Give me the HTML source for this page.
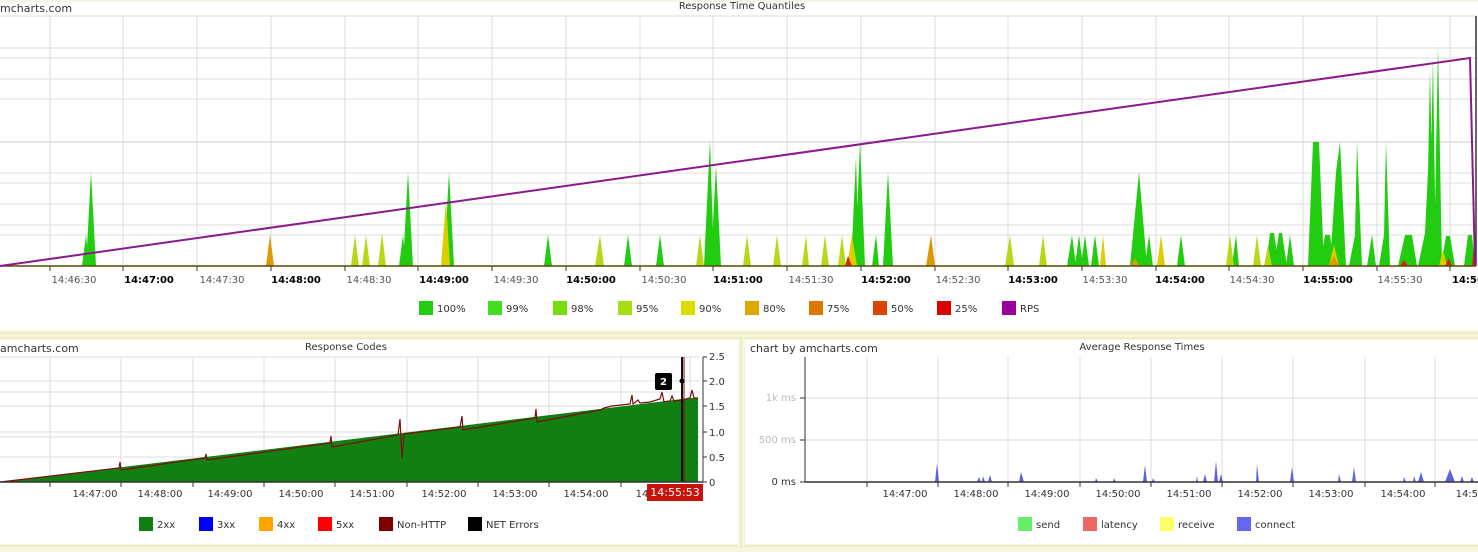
<!DOCTYPE html>
<html><head><meta charset="utf-8"><style>
body{margin:0;width:1478px;height:552px;overflow:hidden;background:#fff;font-family:"Liberation Sans",Verdana,sans-serif;}
svg{position:absolute;left:0;top:0}
text{font-family:"DejaVu Sans","Liberation Sans",sans-serif;font-size:10px}
.b{font-weight:bold;fill:#000}
.g{fill:#555}
.w{fill:#fff}
.l{fill:#bbb}
</style></head><body>
<svg width="1478" height="552" viewBox="0 0 1478 552" fill="#333">
<rect x="0" y="0" width="1478" height="552" fill="#fff"/>
<rect x="0" y="330" width="1478" height="10" fill="#f6f6dc"/>
<line x1="0" y1="333" x2="1478" y2="333" stroke="#e6e6b0"/>
<line x1="0" y1="338" x2="1478" y2="338" stroke="#e6e6b0"/>
<rect x="0" y="544" width="1478" height="8" fill="#f6f6dc"/>
<line x1="0" y1="546" x2="1478" y2="546" stroke="#e6e6b0"/>
<rect x="738" y="338" width="7" height="210" fill="#f6f6dc"/>
<line x1="741" y1="338" x2="741" y2="548" stroke="#e6e6b0"/>
<line x1="0" y1="1" x2="1478" y2="1" stroke="#eeeec8"/>

<text x="742" y="9" text-anchor="middle">Response Time Quantiles</text>
<text x="0" y="12" style="font-size:11px">mcharts.com</text>
<g stroke="#ddd" stroke-width="1">
<line x1="0" y1="16" x2="1476" y2="16"/><line x1="0" y1="48" x2="1476" y2="48"/><line x1="0" y1="58" x2="1476" y2="58"/>
<line x1="0" y1="79" x2="1476" y2="79"/><line x1="0" y1="99" x2="1476" y2="99"/><line x1="0" y1="142" x2="1476" y2="142" stroke="#ccc"/>
<line x1="0" y1="173" x2="1476" y2="173"/><line x1="0" y1="183" x2="1476" y2="183"/><line x1="0" y1="204" x2="1476" y2="204"/>
<line x1="0" y1="225" x2="1476" y2="225"/><line x1="0" y1="235" x2="1476" y2="235"/>
<line x1="50" y1="16" x2="50" y2="266"/><line x1="123" y1="16" x2="123" y2="266"/><line x1="197" y1="16" x2="197" y2="266"/>
<line x1="271" y1="16" x2="271" y2="266"/><line x1="345" y1="16" x2="345" y2="266"/><line x1="418" y1="16" x2="418" y2="266"/>
<line x1="492" y1="16" x2="492" y2="266"/><line x1="566" y1="16" x2="566" y2="266"/><line x1="640" y1="16" x2="640" y2="266"/>
<line x1="713" y1="16" x2="713" y2="266"/><line x1="787" y1="16" x2="787" y2="266"/><line x1="861" y1="16" x2="861" y2="266"/>
<line x1="935" y1="16" x2="935" y2="266"/><line x1="1008" y1="16" x2="1008" y2="266"/><line x1="1082" y1="16" x2="1082" y2="266"/>
<line x1="1156" y1="16" x2="1156" y2="266"/><line x1="1229" y1="16" x2="1229" y2="266"/><line x1="1303" y1="16" x2="1303" y2="266"/>
<line x1="1377" y1="16" x2="1377" y2="266"/><line x1="1450" y1="16" x2="1450" y2="266"/>
</g>
<path fill="#22cc11" d="M82,266L86,235L89,266ZM86,266L91,172L96,266Z
M399,266L403,235L406,266ZM403,266L408,172L413,266ZM444,266L449,172L454,266Z
M544,266L548,235L552,266ZM624,266L628,235L632,266ZM656,266L660,235L664,266Z
M704,266L710,140L714,266ZM711,266L716,165L721,266Z
M851,266L856,157L859,266ZM855,266L860,142L865,266ZM872,266L876,235L879,266ZM883,266L888,172L893,266Z
M1067,266L1072,235L1076,266ZM1075,266L1079,235L1083,266ZM1081,266L1085,235L1089,266ZM1091,266L1095,235L1099,266Z
M1130,266L1139,172L1147,266ZM1145,266L1149,235L1153,266ZM1177,266L1181,235L1185,266Z
M1232,266L1236,235L1239,266ZM1266,266L1270,233L1274,233L1279,266ZM1274,266L1279,233L1282,233L1287,266ZM1286,266L1290,235L1294,266Z
M1308,266L1313,142L1319,142L1324,266ZM1320,266L1325,235L1330,235L1334,266ZM1330,266L1336,172L1340,142L1346,266Z
M1349,266L1355,235L1357,142L1362,266ZM1367,266L1372,235L1376,266ZM1379,266L1384,235L1386,142L1390,266ZM1398,266L1405,235L1412,235L1417,266Z
M1418,266L1425,233L1428,172L1430,70L1434,266ZM1429,266L1433,58L1436,266ZM1434,266L1438,45L1442,266ZM1441,266L1446,236L1450,236L1455,266ZM1464,266L1468,235L1472,235L1475,266Z"/>
<path fill="#b6d816" d="M351,266L355,235L359,266ZM362,266L366,235L370,266ZM378,266L382,233L386,266ZM595,266L600,235L604,266ZM696,266L700,235L704,266Z
M743,266L747,235L751,266ZM773,266L777,235L781,266ZM802,266L806,235L809,266ZM821,266L825,235L829,266ZM838,266L842,235L846,266Z
M1005,266L1010,235L1014,266ZM1039,266L1043,235L1047,266ZM1226,266L1230,235L1234,266ZM1253,266L1257,235L1261,266ZM1264,266L1268,245L1272,266Z"/>
<path fill="#ddcc00" d="M441,266L446,200L450,266ZM847,266L852,235L857,266ZM1100,266L1103,235L1106,266ZM1157,266L1161,235L1165,266ZM1329,266L1334,245L1339,266ZM1439,266L1443,250L1447,266Z"/>
<path fill="#dd9900" d="M266,266L270,235L274,266ZM926,266L931,235L935,266ZM1131,266L1135,258L1139,266ZM1329,266L1334,256L1339,266Z"/>
<path fill="#dd2200" d="M845,266L848,256L852,266ZM1400,266L1404,260L1408,266ZM1445,266L1449,258L1452,266ZM1472,266L1475,235L1476,266Z"/>
<line x1="0" y1="266" x2="1476" y2="266" stroke="#5a4a00" stroke-width="1.5"/>
<line x1="1476" y1="16" x2="1476" y2="266" stroke="#333" stroke-width="1.5"/>
<polyline points="0,266 1470,58 1475,266" fill="none" stroke="#8b1a8b" stroke-width="2"/>
<g stroke="#333"><line x1="50" y1="266" x2="50" y2="271"/><line x1="123" y1="266" x2="123" y2="271"/><line x1="197" y1="266" x2="197" y2="271"/><line x1="271" y1="266" x2="271" y2="271"/><line x1="345" y1="266" x2="345" y2="271"/><line x1="418" y1="266" x2="418" y2="271"/><line x1="492" y1="266" x2="492" y2="271"/><line x1="566" y1="266" x2="566" y2="271"/><line x1="640" y1="266" x2="640" y2="271"/><line x1="713" y1="266" x2="713" y2="271"/><line x1="787" y1="266" x2="787" y2="271"/><line x1="861" y1="266" x2="861" y2="271"/><line x1="935" y1="266" x2="935" y2="271"/><line x1="1008" y1="266" x2="1008" y2="271"/><line x1="1082" y1="266" x2="1082" y2="271"/><line x1="1156" y1="266" x2="1156" y2="271"/><line x1="1229" y1="266" x2="1229" y2="271"/><line x1="1303" y1="266" x2="1303" y2="271"/><line x1="1377" y1="266" x2="1377" y2="271"/><line x1="1450" y1="266" x2="1450" y2="271"/></g>
<g>
<text x="74" y="283" text-anchor="middle" class="g">14:46:30</text>
<text x="149" y="283" text-anchor="middle" class="b">14:47:00</text>
<text x="222" y="283" text-anchor="middle" class="g">14:47:30</text>
<text x="296" y="283" text-anchor="middle" class="b">14:48:00</text>
<text x="369" y="283" text-anchor="middle" class="g">14:48:30</text>
<text x="444" y="283" text-anchor="middle" class="b">14:49:00</text>
<text x="516" y="283" text-anchor="middle" class="g">14:49:30</text>
<text x="591" y="283" text-anchor="middle" class="b">14:50:00</text>
<text x="664" y="283" text-anchor="middle" class="g">14:50:30</text>
<text x="738" y="283" text-anchor="middle" class="b">14:51:00</text>
<text x="811" y="283" text-anchor="middle" class="g">14:51:30</text>
<text x="886" y="283" text-anchor="middle" class="b">14:52:00</text>
<text x="958" y="283" text-anchor="middle" class="g">14:52:30</text>
<text x="1033" y="283" text-anchor="middle" class="b">14:53:00</text>
<text x="1105" y="283" text-anchor="middle" class="g">14:53:30</text>
<text x="1180" y="283" text-anchor="middle" class="b">14:54:00</text>
<text x="1252" y="283" text-anchor="middle" class="g">14:54:30</text>
<text x="1328" y="283" text-anchor="middle" class="b">14:55:00</text>
<text x="1400" y="283" text-anchor="middle" class="g">14:55:30</text>
<text x="1452" y="283" class="b">14:56</text>
</g>
<g>
<rect x="419" y="301" width="14" height="14" fill="#22cc11"/><text x="437" y="312">100%</text>
<rect x="488" y="301" width="14" height="14" fill="#44dd22"/><text x="506" y="312">99%</text>
<rect x="553" y="301" width="14" height="14" fill="#77dd11"/><text x="571" y="312">98%</text>
<rect x="618" y="301" width="14" height="14" fill="#aadd11"/><text x="636" y="312">95%</text>
<rect x="681" y="301" width="14" height="14" fill="#dddd00"/><text x="699" y="312">90%</text>
<rect x="745" y="301" width="14" height="14" fill="#ddaa00"/><text x="763" y="312">80%</text>
<rect x="809" y="301" width="14" height="14" fill="#dd7700"/><text x="827" y="312">75%</text>
<rect x="873" y="301" width="14" height="14" fill="#dd4400"/><text x="891" y="312">50%</text>
<rect x="937" y="301" width="14" height="14" fill="#dd0000"/><text x="955" y="312">25%</text>
<rect x="1002" y="301" width="14" height="14" fill="#990099"/><text x="1020" y="312">RPS</text>
</g>

<text x="0" y="352" style="font-size:11px">amcharts.com</text>
<text x="346" y="350" text-anchor="middle">Response Codes</text>
<g stroke="#ddd">
<line x1="0" y1="357" x2="700" y2="357"/><line x1="0" y1="381" x2="700" y2="381"/><line x1="0" y1="392" x2="700" y2="392"/><line x1="0" y1="406" x2="700" y2="406"/><line x1="0" y1="432" x2="700" y2="432"/><line x1="0" y1="437" x2="700" y2="437"/><line x1="0" y1="457" x2="700" y2="457"/>
<line x1="50" y1="357" x2="50" y2="482"/><line x1="121" y1="357" x2="121" y2="482"/><line x1="193" y1="357" x2="193" y2="482"/><line x1="264" y1="357" x2="264" y2="482"/><line x1="335" y1="357" x2="335" y2="482"/><line x1="407" y1="357" x2="407" y2="482"/><line x1="478" y1="357" x2="478" y2="482"/><line x1="549" y1="357" x2="549" y2="482"/><line x1="621" y1="357" x2="621" y2="482"/><line x1="690" y1="357" x2="690" y2="482"/>
</g>
<polygon points="0,482 690,398 698,398 698,482" fill="#117f11"/>
<polyline fill="none" stroke="#7a1010" stroke-width="1.2" points="0,482 119,468 120,462 121,470 205,458 206,454 207,460 330,443 331,436 332,447 398,435 400,419 402,458 404,434 460,427 462,416 463,430 535,418 536,409 537,422 590,412 600,410 604,408 612,406 630,404 632,395 633,404 638,400 640,403 650,402 660,399 662,392 664,402 670,401 672,396 674,401 682,400 690,398 692,390 694,398 698,398"/>
<line x1="682" y1="357" x2="682" y2="482" stroke="#111" stroke-width="2"/>
<line x1="684" y1="357" x2="684" y2="482" stroke="#8b0000" stroke-width="1"/>
<circle cx="682" cy="381" r="2.5" fill="#000"/>
<rect x="655" y="373" width="17" height="17" rx="2" fill="#000"/><text x="663.5" y="385" text-anchor="middle" class="w" style="font-weight:bold">2</text>
<line x1="0" y1="482" x2="703" y2="482" stroke="#333" stroke-width="1.5"/>
<line x1="703" y1="357" x2="703" y2="482" stroke="#333"/>
<g>
<line x1="703" y1="357" x2="707" y2="357" stroke="#333"/><text x="709" y="360">2.5</text>
<line x1="703" y1="381" x2="707" y2="381" stroke="#333"/><text x="709" y="385">2.0</text>
<line x1="703" y1="406" x2="707" y2="406" stroke="#333"/><text x="709" y="410">1.5</text>
<line x1="703" y1="432" x2="707" y2="432" stroke="#333"/><text x="709" y="436">1.0</text>
<line x1="703" y1="457" x2="707" y2="457" stroke="#333"/><text x="709" y="461">0.5</text>
<line x1="703" y1="482" x2="707" y2="482" stroke="#333"/><text x="709" y="486">0</text>
</g>
<g stroke="#333"><line x1="50" y1="482" x2="50" y2="487"/><line x1="121" y1="482" x2="121" y2="487"/><line x1="193" y1="482" x2="193" y2="487"/><line x1="264" y1="482" x2="264" y2="487"/><line x1="335" y1="482" x2="335" y2="487"/><line x1="407" y1="482" x2="407" y2="487"/><line x1="478" y1="482" x2="478" y2="487"/><line x1="549" y1="482" x2="549" y2="487"/><line x1="621" y1="482" x2="621" y2="487"/></g>
<g text-anchor="middle">
<text x="95" y="497">14:47:00</text><text x="160" y="497">14:48:00</text><text x="230" y="497">14:49:00</text><text x="301" y="497">14:50:00</text><text x="372" y="497">14:51:00</text><text x="444" y="497">14:52:00</text><text x="515" y="497">14:53:00</text><text x="586" y="497">14:54:00</text><text x="642" y="497">14</text>
</g>
<rect x="647" y="484" width="56" height="17" fill="#c8120c"/><text x="675" y="496" text-anchor="middle" class="w" style="font-size:11px">14:55:53</text>
<g>
<rect x="139" y="517" width="14" height="14" fill="#117f11"/><text x="157" y="528">2xx</text>
<rect x="199" y="517" width="14" height="14" fill="#0000ff"/><text x="217" y="528">3xx</text>
<rect x="259" y="517" width="14" height="14" fill="#ffa500"/><text x="277" y="528">4xx</text>
<rect x="318" y="517" width="14" height="14" fill="#ff0000"/><text x="336" y="528">5xx</text>
<rect x="379" y="517" width="14" height="14" fill="#800000"/><text x="397" y="528">Non-HTTP</text>
<rect x="468" y="517" width="14" height="14" fill="#000"/><text x="486" y="528">NET Errors</text>
</g>

<text x="750" y="352" style="font-size:11px">chart by amcharts.com</text>
<text x="1142" y="350" text-anchor="middle">Average Response Times</text>
<g stroke="#ddd">
<line x1="805" y1="398" x2="1478" y2="398"/><line x1="805" y1="440" x2="1478" y2="440"/>
<line x1="867" y1="357" x2="867" y2="482"/><line x1="938" y1="357" x2="938" y2="482"/><line x1="1008" y1="357" x2="1008" y2="482"/><line x1="1080" y1="357" x2="1080" y2="482"/><line x1="1151" y1="357" x2="1151" y2="482"/><line x1="1222" y1="357" x2="1222" y2="482"/><line x1="1293" y1="357" x2="1293" y2="482"/><line x1="1365" y1="357" x2="1365" y2="482"/><line x1="1435" y1="357" x2="1435" y2="482"/>
</g>
<path fill="#6060dd" d="M935,482L937,463L939,482ZM977,482L979,477L981,482ZM982,482L983,476L985,482ZM988,482L990,475L992,482ZM1019,482L1021,472L1024,482ZM1095,482L1096,478L1098,482ZM1113,482L1114,478L1116,482ZM1143,482L1145,465L1147,482ZM1152,482L1153,478L1155,482ZM1196,482L1197,476L1198,482ZM1203,482L1205,474L1207,482ZM1214,482L1216,461L1218,482ZM1219,482L1221,474L1223,482ZM1256,482L1257,464L1259,482ZM1290,482L1292,467L1294,482ZM1338,482L1339,474L1341,482ZM1352,482L1354,467L1356,482ZM1403,482L1404,477L1406,482ZM1413,482L1414,476L1416,482ZM1418,482L1421,472L1424,482ZM1445,482L1450,469L1455,482ZM1460,482L1462,476L1464,482ZM1470,482L1472,477L1474,482Z"/>
<line x1="805" y1="482" x2="1478" y2="482" stroke="#333" stroke-width="1.5"/>
<line x1="805" y1="357" x2="805" y2="482" stroke="#333"/>
<g stroke="#333"><line x1="800" y1="398" x2="805" y2="398"/><line x1="800" y1="440" x2="805" y2="440"/><line x1="800" y1="482" x2="805" y2="482"/>
<line x1="867" y1="482" x2="867" y2="487"/><line x1="938" y1="482" x2="938" y2="487"/><line x1="1008" y1="482" x2="1008" y2="487"/><line x1="1080" y1="482" x2="1080" y2="487"/><line x1="1151" y1="482" x2="1151" y2="487"/><line x1="1222" y1="482" x2="1222" y2="487"/><line x1="1293" y1="482" x2="1293" y2="487"/><line x1="1365" y1="482" x2="1365" y2="487"/><line x1="1435" y1="482" x2="1435" y2="487"/></g>
<g text-anchor="end"><text x="796" y="401" class="l">1k ms</text><text x="796" y="443" class="l">500 ms</text></g>
<text x="796" y="485" text-anchor="end">0 ms</text>
<g text-anchor="middle">
<text x="905" y="497">14:47:00</text><text x="976" y="497">14:48:00</text><text x="1047" y="497">14:49:00</text><text x="1118" y="497">14:50:00</text><text x="1189" y="497">14:51:00</text><text x="1260" y="497">14:52:00</text><text x="1331" y="497">14:53:00</text><text x="1403" y="497">14:54:00</text><text x="1470" y="497">14:55</text>
</g>
<g>
<rect x="1018" y="517" width="14" height="14" fill="#66ee66"/><text x="1036" y="528">send</text>
<rect x="1083" y="517" width="14" height="14" fill="#ee6666"/><text x="1101" y="528">latency</text>
<rect x="1160" y="517" width="14" height="14" fill="#ffff66"/><text x="1178" y="528">receive</text>
<rect x="1237" y="517" width="14" height="14" fill="#6666ee"/><text x="1255" y="528">connect</text>
</g>
</svg>
</body></html>
